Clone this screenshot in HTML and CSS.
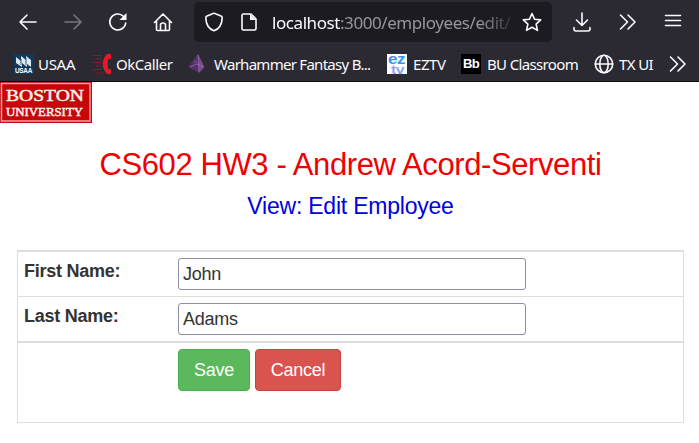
FILE: index.html
```html
<!DOCTYPE html>
<html lang="en">
<head>
<meta charset="utf-8">
<title>Edit Employee</title>
<link rel="stylesheet" href="styles.css">
</head>
<body>
<header class="browser">
  <nav class="toolbar">
    <svg class="icon back" viewBox="0 0 20 20"><path d="M18 10H2M9 3L2 10l7 7"/></svg>
    <svg class="icon forward" viewBox="0 0 20 20"><path d="M2 10h16M11 3l7 7-7 7"/></svg>
    <svg class="icon reload" viewBox="0 0 20 20"><path d="M17.700 11A8 8 0 1 1 15.400 4.300"/><path class="solid" d="M18.500 1v7h-7z"/></svg>
    <svg class="icon home" viewBox="0 0 20 20"><path d="M1.500 10.500L10 2l8.500 8.500M3.500 9v8.500q0 1 1 1h11q1 0 1-1V9M7.500 18v-5q0-2 2.500-2t2.500 2v5"/></svg>
    <div class="address">
      <svg class="icon shield" viewBox="0 0 20 20"><path d="M10 1.300q1 0 2 .6l5 2q1.300.5 1.200 2C18 12 15 17 10 18.800 5 17 2 12 1.800 5.900q-.1-1.500 1.200-2l5-2q1-.6 2-.6z"/></svg>
      <svg class="icon page" viewBox="0 0 20 20"><path d="M4.500 2H12l5 5v9.500q0 1.500-1.500 1.500h-11Q3 18 3 16.500v-13Q3 2 4.500 2z"/><path class="solid" d="M11 2v6h6z"/></svg>
      <div class="url"><b>localhost</b>:3000/employees/edit/</div>
      <svg class="icon star" viewBox="0 0 20 20"><path d="M10 1.500l2.600 5.800 6.100.6-4.600 4.200 1.400 6.300L10 15.200l-5.500 3.200 1.400-6.300L1.300 7.900l6.100-.6z"/></svg>
    </div>
    <svg class="icon download" viewBox="0 0 20 20"><path d="M10 1v12.500M4.500 8l5.500 5.500L15.500 8M2 15.500V17q0 2 2 2h12q2 0 2-2v-1.500"/></svg>
    <svg class="icon more" viewBox="0 0 20 20"><path d="M2.500 3l7 7-7 7M10 3l7 7-7 7"/></svg>
    <svg class="icon menu" viewBox="0 0 20 20"><path d="M2.500 3.500h15M2.500 8.500h15M2.500 13.500h15"/></svg>
  </nav>
  <nav class="bookmarks">
    <a class="mark usaa"><svg viewBox="0 0 20 20"><path fill="#12395b" d="M0 0h20v20H0z"/><path fill="#dcebf2" d="M2 3l5 4V2l5 4V2l5 4v7l-4-3v3L8 9v4L2 9z"/><path stroke="#12395b" stroke-width=".8" d="M7 5v6M12 4v7"/><text x="1" y="19" font-size="6.500" font-weight="700" fill="#fff" textLength="17" lengthAdjust="spacingAndGlyphs">USAA</text></svg><span>USAA</span></a>
    <a class="mark ok"><svg viewBox="0 0 20 20"><path stroke="#8d1727" stroke-width="1.200" d="M-3 1.500h9M0 5h6M-3 8.500h8M0 12h5M-3 15.500h9M0 19h7"/><path fill="#f0142b" d="M11 0h3q1 0 1 1v4q-3-1-3 1-.8 4 0 8 0 2 3 1v4q0 1-1 1h-3Q2.500 10 11 0z"/></svg><span>OkCaller</span></a>
    <a class="mark war"><svg viewBox="0 0 20 20"><path fill="#513265" d="M10 0L0 13l11 6z"/><path fill="#7b4b8f" d="M10 0l6.500 13-5.500 6z"/><path stroke="#a070b4" stroke-width=".7" d="M10 1l1 17M2 13l7-3 6 3M6 7l3 2" fill="none"/></svg><span>Warhammer Fantasy B...</span></a>
    <a class="mark ez"><svg viewBox="0 0 20 20"><path fill="#fff" d="M0 0h20v20H0z"/><text x="1" y="9.500" font-size="14" font-weight="700" fill="#3d94e8" textLength="17" lengthAdjust="spacingAndGlyphs">ez</text><text x="4" y="19.500" font-size="12" font-weight="700" fill="#91a3f3" textLength="13" lengthAdjust="spacingAndGlyphs">tv</text></svg><span>EZTV</span></a>
    <a class="mark bu"><svg viewBox="0 0 20 20"><path d="M0 0h20v20H0z"/><text x="2" y="14" font-size="12" font-weight="700" fill="#fff" textLength="16" lengthAdjust="spacingAndGlyphs">Bb</text></svg><span>BU Classroom</span></a>
    <a class="mark tx"><svg class="icon" viewBox="0 0 20 20"><circle cx="10" cy="10" r="8.700"/><ellipse cx="10" cy="10" rx="4.200" ry="8.700"/><path d="M1.300 10h17.400"/></svg><span>TX UI</span></a>
    <svg class="icon" viewBox="0 0 20 20"><path d="M2.500 3l7 7-7 7M10 3l7 7-7 7"/></svg>
  </nav>
</header>
<main>
  <div class="logo"><svg viewBox="0 0 92 41"><path fill="#c8060a" d="M0 0h92v41H0z"/><path fill="none" stroke="#f0a0a0" stroke-width="1.500" d="M1.500 1.500h88.500v37.500H1.500z"/><text x="6" y="19" font-size="17" textLength="78" lengthAdjust="spacingAndGlyphs">BOSTON</text><text x="6" y="34" font-size="13" textLength="77" lengthAdjust="spacingAndGlyphs">UNIVERSITY</text></svg></div>
  <h1>CS602 HW3 - Andrew Acord-Serventi</h1>
  <h2>View: Edit Employee</h2>
  <form class="form">
    <div class="row first"><label for="first">First Name:</label><input id="first" value="John"></div>
    <div class="row second"><label for="last">Last Name:</label><input id="last" value="Adams"></div>
    <div class="row actions"><button class="save" type="button">Save</button><button class="cancel" type="button">Cancel</button></div>
  </form>
</main>
</body>
</html>
```
FILE: styles.css
```css
* { box-sizing: border-box; }
body { margin: 0; background: #fff; color: #333; font-family: "Liberation Sans", Arial, sans-serif; font-size: 18px; }
.browser { height: 82px; background: #2b2a33; border-bottom: 1px solid #0c0c0d; color: #fbfbfe; font-family: "Noto Sans", "Open Sans", sans-serif; overflow: hidden; }
.toolbar { display: flex; align-items: center; height: 42px; padding: 1px 0 0 18px; }
.icon { width: 20px; height: 20px; flex: none; fill: none; stroke: #fbfbfe; stroke-width: 1.6; stroke-linecap: round; stroke-linejoin: round; }
.icon .solid { fill: #fbfbfe; stroke: none; }
.forward { margin-left: 25px; stroke: #77767d; }
.reload { margin-left: 25px; }
.home { margin-left: 25px; }
.address { display: flex; align-items: center; width: 358px; height: 40px; margin-left: 21px; padding-left: 10px; background: #1c1b22; border-radius: 5px; }
.page { margin-left: 15px; }
.url { width: 242px; margin-left: 13px; font-size: 17px; line-height: 26px; letter-spacing: -0.43px; white-space: nowrap; color: #97969d; padding-top: 3px; -webkit-mask-image: linear-gradient(to right, #000 86%, transparent 102%); mask-image: linear-gradient(to right, #000 86%, transparent 102%); }
.url b { font-weight: 400; color: #fbfbfe; }
.star { margin-left: 8px; }
.download { margin-left: 20px; }
.more { margin-left: 26px; }
.menu { margin-left: 25px; }
.bookmarks { display: flex; align-items: center; height: 40px; padding: 4px 0 0 14px; font-size: 15px; }
.mark { display: flex; align-items: center; gap: 6px; height: 24px; flex: none; white-space: nowrap; }
.mark svg { width: 20px; height: 20px; flex: none; font-family: "Liberation Sans", sans-serif; }
.usaa { width: 82px; gap: 4px; letter-spacing: -0.3px; }
.ok { width: 92px; gap: 0; letter-spacing: -0.45px; }
.ok svg { overflow: visible; }
.war { width: 199px; letter-spacing: -0.72px; }
.ez { width: 74px; letter-spacing: -0.4px; }
.bu { width: 133px; letter-spacing: -0.65px; }
.tx { width: 74px; gap: 5px; letter-spacing: -0.6px; }
.logo { width: 92px; height: 41px; font-family: "Liberation Serif", serif; font-weight: 400; }
.logo svg { display: block; width: 92px; height: 41px; }
.logo text { fill: #fff0ec; stroke: #fff0ec; stroke-width: .5; }
h1, h2 { margin: 0; font-weight: 400; text-align: center; }
h1 { margin-top: 24px; color: #f00000; font-size: 31px; letter-spacing: -0.4px; line-height: 36px; padding-left: 2px; }
h2 { margin-top: 9px; color: #0000e0; font-size: 23px; letter-spacing: -0.22px; line-height: 28px; padding-left: 2px; }
.form { width: 667px; margin: 30px 0 0 17px; border: 1px solid #ddd; border-top-width: 2px; }
.row { display: flex; align-items: flex-start; padding: 6px 6px 0; }
.first { height: 45px; border-bottom: 1px solid #ddd; }
.second { height: 46px; border-bottom: 2px solid #ddd; }
label { width: 154px; font-weight: 700; line-height: 26px; font-size: 18px; letter-spacing: -0.25px; }
input { width: 348px; height: 32px; border: 1px solid #8f8f9d; border-radius: 3px; padding: 1px 4px; font: inherit; letter-spacing: -0.25px; color: #333; background: #fff; }
.actions { height: 79px; padding-left: 160px; gap: 5px; }
button { height: 42px; padding: 0; border-radius: 4px; font: inherit; letter-spacing: -0.25px; color: #fff; }
.save { width: 72px; background: #5cb85c; border: 1px solid #4cae4c; }
.cancel { width: 86px; background: #d9534f; border: 1px solid #c9403c; }
```
